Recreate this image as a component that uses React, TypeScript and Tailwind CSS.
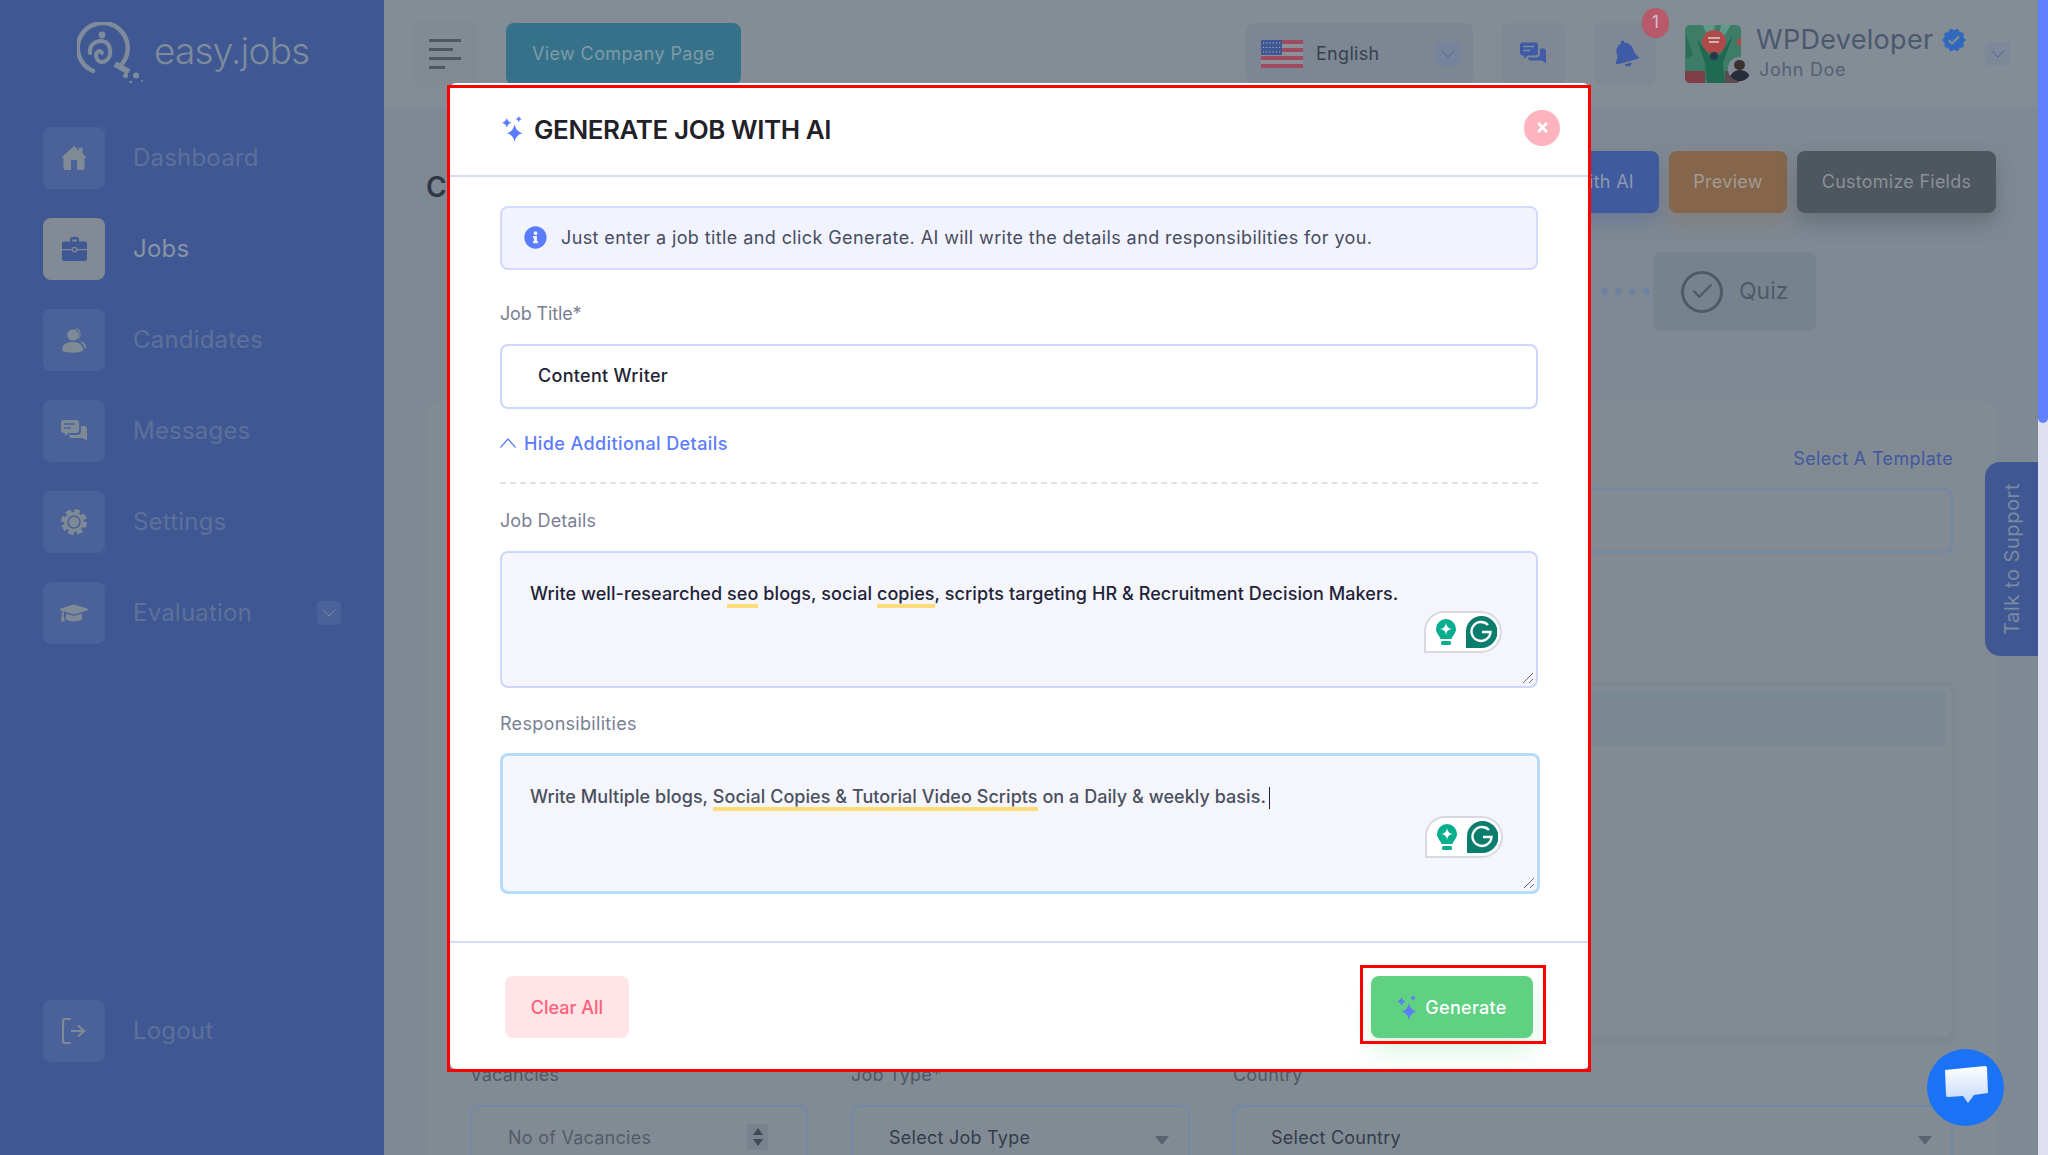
import { ChevronDown, Check } from 'lucide-react';
import { FaBell, FaGraduationCap, FaInfoCircle, FaTimes } from 'react-icons/fa';
import { MdVerified } from 'react-icons/md';

function Sparkles({ className }: { className?: string }) {
  return (
    <svg viewBox="0 0 20 25" className={className} fill="#5b7cfd">
      <path d="M12 8 Q13.3 15.2 19.5 16.5 Q13.3 17.8 12 25 Q10.7 17.8 4.5 16.5 Q10.7 15.2 12 8Z" />
      <path d="M4.5 2 Q5.4 5.6 9 6.5 Q5.4 7.4 4.5 11 Q3.6 7.4 0 6.5 Q3.6 5.6 4.5 2Z" />
      <path d="M16 0 Q16.5 2.5 19 3 Q16.5 3.5 16 6 Q15.5 3.5 13 3 Q15.5 2.5 16 0Z" />
    </svg>
  );
}

function Logo() {
  return (
    <svg viewBox="0 0 66 62" className="w-[66px] h-[62px]" fill="none" stroke="#7d8b9b">
      <path d="M16 49 A25 25 0 1 1 42 45" strokeWidth="4.5" strokeLinecap="round" />
      <path d="M13 31 C11 18 31 14 33 27 C35 38 24 44 20 37 C17 31 23 26 25 31" strokeWidth="4" strokeLinecap="round" />
      <circle cx="25" cy="13" r="3.4" fill="#7d8b9b" stroke="none" />
      <path d="M38 42 L52 50" strokeWidth="6" />
      <g fill="#7d8b9b" stroke="none">
        <circle cx="48.6" cy="53.6" r="2.5" />
        <circle cx="59" cy="53.6" r="3" />
        <circle cx="53.7" cy="60" r="1.3" />
        <circle cx="65" cy="59" r="1" />
      </g>
    </svg>
  );
}

function HomeIcon() {
  return (
    <svg viewBox="0 0 24 24" className="w-[24px] h-[24px]" fill="#7f8a97">
      <path fillRule="evenodd" d="M12 0 L17 4.6 V1.5 H20.5 V7.8 L24 11 V12 H22.5 V22.5 A1.5 1.5 0 0 1 21 24 H3 A1.5 1.5 0 0 1 1.5 22.5 V12 H0 V11Z M9 14 V24 H15 V14Z" />
    </svg>
  );
}

function BriefcaseIcon() {
  return (
    <svg viewBox="0 0 25 24" className="w-[25px] h-[24px]" fill="#3f5894">
      <path d="M8 5 V2.5 A2.5 2.5 0 0 1 10.5 0 H14.5 A2.5 2.5 0 0 1 17 2.5 V5 H14.8 V2.4 H10.2 V5Z" />
      <path d="M2 4.5 H23 A2 2 0 0 1 25 6.5 V12 H15.4 A3 3 0 0 0 9.6 12 H0 V6.5 A2 2 0 0 1 2 4.5Z" />
      <path d="M0 13.2 H9.6 A3 3 0 0 0 15.4 13.2 H25 V22 A2 2 0 0 1 23 24 H2 A2 2 0 0 1 0 22Z" />
      <circle cx="12.5" cy="12.6" r="1.6" />
    </svg>
  );
}

function UserIcon() {
  return (
    <svg viewBox="0 0 24 25" className="w-[24px] h-[25px]" fill="#7f8a97">
      <circle cx="11" cy="7" r="5.8" />
      <path d="M14 .6 C18 1 19.5 7 16.5 11" fill="none" stroke="#7f8a97" strokeWidth="1.2" />
      <path d="M0 22 C0 16 5 14 11 14 C17 14 21 17 21 22 C21 25.5 0 25.5 0 22Z" />
      <path d="M19 14 C22 15 24 18 23 20.5" fill="none" stroke="#7f8a97" strokeWidth="1.8" />
    </svg>
  );
}

function ChatIcon({ fill, bars, className }: { fill: string; bars: string; className: string }) {
  return (
    <svg viewBox="0 0 26 23" className={className}>
      <path d="M3 0 H15 A3 3 0 0 1 18 3 V10 A3 3 0 0 1 15 13 H8 L4 16 V13 H3 A3 3 0 0 1 0 10 V3 A3 3 0 0 1 3 0Z" fill={fill} />
      <path d="M3 4 H14 M3 8 H10" stroke={bars} strokeWidth="1.4" />
      <path d="M20 6 H23 A3 3 0 0 1 26 9 V21 L22 18 H11 A3 3 0 0 1 8 15 H16 A4 4 0 0 0 20 11Z" fill={fill} />
    </svg>
  );
}

function GearIcon() {
  return (
    <svg viewBox="0 0 26 26" className="w-[26px] h-[26px]" fill="none">
      <circle cx="13" cy="13" r="11" stroke="#7f8a97" strokeWidth="4" strokeDasharray="5.6 3.04" />
      <circle cx="13" cy="13" r="10" fill="#7f8a97" />
      <circle cx="13" cy="13" r="6" stroke="#4a6199" strokeWidth="1.5" />
    </svg>
  );
}

function LogoutIcon() {
  return (
    <svg viewBox="0 0 24 26" className="w-[24px] h-[26px]" fill="none" stroke="#7f8a97" strokeWidth="2.2">
      <path d="M9 1 H3 A2 2 0 0 0 1 3 V23 A2 2 0 0 0 3 25 H9" />
      <path d="M9 13 H22 M16 7.5 L22 13 L16 18.5" />
    </svg>
  );
}

function Flag() {
  return (
    <svg viewBox="0 0 42 28" className="w-[42px] h-[28px]">
      <rect width="42" height="28" fill="#8a929c" />
      <rect y="0" width="42" height="4" fill="#a04a5e" />
      <rect y="8" width="42" height="4" fill="#a04a5e" />
      <rect y="16" width="42" height="4" fill="#a04a5e" />
      <rect y="24" width="42" height="4" fill="#a04a5e" />
      <rect width="21" height="15" fill="#3f5894" />
      <path d="M2 3 H20 M2 7.5 H20 M2 12 H20" stroke="#aab2c4" strokeWidth="1.2" strokeDasharray="1.2 2" />
    </svg>
  );
}

function Avatar() {
  return (
    <div className="relative w-[56px] h-[58px] shrink-0">
      <svg viewBox="0 0 56 58" className="w-[56px] h-[58px] rounded-[5px]">
        <rect width="56" height="58" fill="#3d7d68" />
        <path d="M18 0 L26 22 L30 0Z M36 0 L32 22 L46 0Z" fill="#5f9a88" />
        <circle cx="29" cy="17" r="12" fill="#b04a4a" />
        <path d="M23 13 H35 M24 17 H34" stroke="#d9d4cd" strokeWidth="1.4" />
        <path d="M12 14 L20 38 L22 58 H40 L38 38 L48 10 L35 30 H24Z" fill="#1f6a50" />
        <circle cx="29" cy="31" r="4" fill="#26384f" />
        <path d="M0 46 H20 V58 H0Z" fill="#803e48" />
        <path d="M40 46 H56 V58 H40Z" fill="#5c4a50" />
        <path d="M1 10 L8 30 L1 34Z" fill="#2e6b54" />
        <circle cx="56" cy="17" r="4" fill="#a84a48" />
      </svg>
      <div className="absolute left-[43px] top-[32px] w-[23px] h-[24px] rounded-full bg-[#828b95] overflow-hidden flex flex-col items-center">
        <div className="w-[11px] h-[12px] mt-[3px] rounded-full bg-[#3a3230]" />
        <div className="w-[22px] h-[12px] rounded-t-full bg-[#262c38]" />
      </div>
    </div>
  );
}

function GrammarlyBadge() {
  return (
    <div className="absolute left-[922px] bottom-[33px] w-[78px] h-[42px] bg-white border-2 border-[#d8d9e2] rounded-tl-[20px] rounded-tr-[21px] rounded-br-[21px] flex items-center">
      <svg viewBox="0 0 20 26" className="ml-[10px] w-[20px] h-[26px] shrink-0">
        <path d="M10 0 A10 10 0 0 1 20 10 C20 14 17 16 15.5 20 H4.5 C3 16 0 14 0 10 A10 10 0 0 1 10 0Z" fill="#08ae8d" />
        <rect x="5" y="22" width="10" height="4" rx="1.5" fill="#08ae8d" />
        <path d="M10 4 Q10.5 9.5 16 10 Q10.5 10.5 10 16 Q9.5 10.5 4 10 Q9.5 9.5 10 4Z" fill="#fff" />
      </svg>
      <svg viewBox="0 0 31 32" className="ml-[10px] w-[31px] h-[32px] shrink-0">
        <path d="M15.5 0 A15.5 15.5 0 0 1 15.5 32 H0 V15.5 A15.5 15.5 0 0 1 15.5 0Z" fill="#0b7d6c" />
        <path d="M22 9 A9.5 9.5 0 1 0 24.5 16 H16" fill="none" stroke="#fff" strokeWidth="2.4" />
      </svg>
    </div>
  );
}

function ResizeGrip() {
  return (
    <svg viewBox="0 0 12 12" className="absolute right-[2px] bottom-[2px] w-[12px] h-[12px]" stroke="#6d6d73" strokeWidth="1">
      <path d="M1 11 L11 1 M7 11 L11 7" />
    </svg>
  );
}

function Flagged({ children }: { children: string }) {
  return <span className="border-b-4 border-[#fedb7b]">{children}</span>;
}

const navItems = [
  { label: 'Dashboard', icon: <HomeIcon /> },
  { label: 'Jobs', icon: <BriefcaseIcon />, active: true },
  { label: 'Candidates', icon: <UserIcon /> },
  { label: 'Messages', icon: <ChatIcon fill="#7f8a97" bars="#4a6199" className="w-[26px] h-[23px]" /> },
  { label: 'Settings', icon: <GearIcon /> },
  { label: 'Evaluation', icon: <FaGraduationCap size={28} color="#7f8a97" />, caret: true },
];

function NavRow({ label, icon, active, caret }: { label: string; icon: React.ReactNode; active?: boolean; caret?: boolean }) {
  return (
    <div className="flex items-center h-[62px]">
      <div className={`w-[62px] h-[62px] rounded-[8px] flex items-center justify-center ${active ? 'bg-[#828b95]' : 'bg-[#4a6199]'}`}>
        {icon}
      </div>
      <span className={`ml-[28px] text-[24px] tracking-[0.2px] ${active ? 'text-[#8893a3]' : 'text-[#5c7099]'}`}>{label}</span>
      {caret && (
        <div className="ml-auto w-[24px] h-[24px] rounded-[4px] bg-[#4a6199] flex items-center justify-center">
          <ChevronDown size={24} strokeWidth={1} color="#7f8a97" />
        </div>
      )}
    </div>
  );
}

function Sidebar() {
  return (
    <aside className="w-[384px] shrink-0 bg-[#3f5894] flex flex-col pl-[43px] pr-[43px] pb-[93px]">
      <div className="h-[127px] pt-[22px] pl-[34px] flex items-start">
        <Logo />
        <span className="ml-[11px] mt-[1px] text-[37px] font-light tracking-[-0.8px] text-[#7d8b9b]">easy.jobs</span>
      </div>
      <nav className="flex flex-col gap-[29px]">
        {navItems.map((item) => (
          <NavRow key={item.label} {...item} />
        ))}
      </nav>
      <div className="mt-auto">
        <NavRow label="Logout" icon={<LogoutIcon />} />
      </div>
    </aside>
  );
}

function TopBar() {
  return (
    <header className="h-[107px] shrink-0 bg-[#848c96] flex items-center pl-[28px] pr-[28px]">
      <div className="w-[66px] h-[65px] rounded-[8px] bg-[#828a94] flex flex-col justify-center gap-[6px] pl-[17px]">
        <div className="w-[32px] h-[3px] bg-[#4f5862]" />
        <div className="w-[24px] h-[3px] bg-[#4f5862]" />
        <div className="w-[32px] h-[3px] bg-[#4f5862]" />
        <div className="w-[16px] h-[3px] bg-[#4f5862]" />
      </div>
      <div className="ml-[28px] w-[235px] h-[62px] rounded-[8px] bg-[#35728a] flex items-center justify-center text-[18px] tracking-[0.4px] text-[#7f9aa8]">
        View Company Page
      </div>
      <div className="ml-auto w-[227px] h-[62px] rounded-[8px] bg-[#7d8793] flex items-center pl-[15px]">
        <Flag />
        <span className="ml-[13px] text-[18px] text-[#37404f] tracking-[0.3px]">English</span>
        <div className="ml-auto mr-[13px] w-[24px] h-[24px] rounded-[4px] bg-[#76849b] flex items-center justify-center">
          <ChevronDown size={24} strokeWidth={1} color="#4a64a6" />
        </div>
      </div>
      <div className="ml-[28px] w-[64px] h-[62px] rounded-[8px] bg-[#7f8893] flex items-center justify-center">
        <ChatIcon fill="#3f5ba8" bars="#828b95" className="w-[26px] h-[24px]" />
      </div>
      <div className="relative ml-[29px] w-[62px] h-[62px] rounded-[8px] bg-[#7f8893] flex items-center justify-center">
        <FaBell size={27} color="#3f5ba8" className="-rotate-[15deg]" />
        <div className="absolute left-[48px] top-[-15px] w-[27px] h-[30px] rounded-full bg-[#b8596c] flex items-center justify-center text-[17px] text-[#d8c0c8]">
          1
        </div>
      </div>
      <div className="ml-[29px]">
        <Avatar />
      </div>
      <div className="ml-[15px] w-[229px] flex flex-col mt-[-3px]">
        <div className="flex items-center">
          <span className="text-[27px] leading-[36px] text-[#4a586e] tracking-[0.3px]">WPDeveloper</span>
          <MdVerified size={26} color="#2f68bd" className="ml-[8px]" />
        </div>
        <span className="ml-[3px] text-[18px] leading-[24px] text-[#566172] tracking-[0.7px]">John Doe</span>
      </div>
      <div className="w-[25px] h-[24px] rounded-[4px] bg-[#7d8898] flex items-center justify-center">
        <ChevronDown size={24} strokeWidth={1} color="#4a64a6" />
      </div>
    </header>
  );
}

function SelectBox({ text, dark, arrow, spinner }: { text: string; dark?: boolean; arrow?: boolean; spinner?: boolean }) {
  return (
    <div className="h-[70px] rounded-[8px] border-2 border-[#7388a8] flex items-center pl-[36px] pr-[20px] pb-[6px]">
      <span className={`text-[18px] tracking-[0.25px] ${dark ? 'text-[#333c4c]' : 'text-[#525b68]'}`}>{text}</span>
      {arrow && (
        <svg viewBox="0 0 14 9" className="ml-auto mr-[-1px] mt-[6px] w-[14px] h-[9px]" fill="#5a636e">
          <path d="M0 0 H14 L7 9Z" />
        </svg>
      )}
      {spinner && (
        <div className="ml-auto mr-[18px] w-[21px] h-[26px] bg-[#79828c] flex flex-col items-center justify-center gap-[4px]">
          <svg viewBox="0 0 10 7" className="w-[10px] h-[7px]" fill="#3e4753"><path d="M5 0 L10 7 H0Z" /></svg>
          <svg viewBox="0 0 10 7" className="w-[10px] h-[7px]" fill="#3e4753"><path d="M5 7 L10 0 H0Z" /></svg>
        </div>
      )}
    </div>
  );
}

function PageContent() {
  return (
    <div className="flex-1 min-h-0 bg-[#7f8993] flex flex-col pl-[42px] pr-[42px]">
      <div className="mt-[44px] h-[62px] shrink-0 flex items-center">
        <h1 className="pt-[10px] text-[28px] font-semibold text-[#2f3844]">Create A Job</h1>
        <div className="ml-auto flex gap-[10px]">
          <div className="w-[300px] h-[62px] pb-[2px] rounded-[8px] bg-[#3f5a9d] shadow-[0_10px_20px_rgba(63,90,157,0.3)] flex items-center justify-end pr-[25px] text-[18px] text-[#8d98ad] tracking-[0.3px]">
            Generate With AI
          </div>
          <div className="w-[118px] h-[62px] pb-[2px] rounded-[8px] bg-[#85664c] shadow-[0_10px_20px_rgba(133,102,76,0.3)] flex items-center justify-center text-[18px] text-[#a39a90] tracking-[0.3px]">
            Preview
          </div>
          <div className="w-[199px] h-[62px] pb-[2px] rounded-[8px] bg-[#4e565f] shadow-[0_10px_20px_rgba(50,56,64,0.3)] flex items-center justify-center text-[18px] text-[#8b9098] tracking-[0.25px]">
            Customize Fields
          </div>
        </div>
      </div>
      <div className="mt-[39px] h-[79px] shrink-0 flex items-center justify-end pr-[180px]">
        <div className="flex items-center gap-[7px] mr-[3px]">
          <div className="w-[7px] h-[7px] rounded-full bg-[#6f81a0]" />
          <div className="w-[7px] h-[7px] rounded-full bg-[#6f81a0]" />
          <div className="w-[7px] h-[7px] rounded-full bg-[#6f81a0]" />
          <div className="w-[7px] h-[7px] rounded-full bg-[#6f81a0]" />
        </div>
        <div className="w-[163px] h-[79px] rounded-[8px] bg-[#76838f] flex items-center pl-[28px]">
          <div className="w-[42px] h-[42px] rounded-full border-[3px] border-[#4f5a68] flex items-center justify-center">
            <Check size={25} strokeWidth={2.2} color="#4f5a68" />
          </div>
          <span className="ml-[16px] text-[23px] text-[#4f5a68]">Quiz</span>
        </div>
      </div>
      <section className="mt-[71px] flex-1 min-h-0 rounded-t-[10px] bg-[#828b94] pl-[44px] pr-[43px] pt-[43px]">
        <div className="h-[28px] flex justify-end text-[18px] leading-[28px] text-[#41589e] tracking-[0.35px]">Select A Template</div>
        <div className="mt-[15px] h-[65px] rounded-[8px] border-2 border-[#7388a8]" />
        <div className="mt-[131px] h-[354px] rounded-[8px] bg-[#828b94] border border-[#7b858f] shadow-[0_2px_6px_rgba(70,80,90,0.12)] p-[6px]">
          <div className="h-[55px] bg-[#7a8894]" />
        </div>
        <div className="mt-[23px] grid grid-cols-[338px_339px_1fr] gap-x-[43px]">
          <div>
            <div className="h-[28px] text-[18px] leading-[28px] text-[#4f5866] tracking-[0.2px]">Vacancies</div>
            <div className="mt-[16px]"><SelectBox text="No of Vacancies" spinner /></div>
          </div>
          <div>
            <div className="h-[28px] text-[18px] leading-[28px] text-[#4f5866] tracking-[0.2px]">Job Type*</div>
            <div className="mt-[16px]"><SelectBox text="Select Job Type" dark arrow /></div>
          </div>
          <div>
            <div className="h-[28px] text-[18px] leading-[28px] text-[#4f5866] tracking-[0.2px]">Country</div>
            <div className="mt-[16px]"><SelectBox text="Select Country" dark arrow /></div>
          </div>
        </div>
      </section>
    </div>
  );
}

function GenerateModal() {
  return (
    <div className="absolute left-[450px] top-[83px] w-[1139px] h-[986px] bg-white rounded-[6px] flex flex-col">
      <div className="h-[94px] shrink-0 border-b-2 border-[#d3dcfb] flex items-center pl-[52px] pr-[29px]">
        <Sparkles className="w-[21px] h-[26px]" />
        <h2 className="ml-[11px] text-[26px] font-semibold text-[#1f2229] tracking-[-0.42px]">GENERATE JOB WITH AI</h2>
        <button className="ml-auto mt-[-3px] w-[36px] h-[36px] rounded-full bg-[#ffb3bc] flex items-center justify-center">
          <FaTimes size={15} color="#fff" />
        </button>
      </div>
      <div className="flex-1 pl-[50px] pr-[51px] pt-[29px]">
        <div className="h-[64px] pb-[2px] rounded-[8px] border-2 border-[#d3dafc] bg-[#f1f3fe] flex items-center pl-[22px]">
          <FaInfoCircle size={23} color="#5b7cfd" />
          <span className="ml-[14px] text-[18px] text-[#474c60] tracking-[0.4px]">
            Just enter a job title and click Generate. AI will write the details and responsibilities for you.
          </span>
        </div>
        <label className="block mt-[30px] h-[28px] text-[18px] leading-[28px] text-[#7a7f94] tracking-[-0.15px]">Job Title*</label>
        <div className="mt-[16px] h-[65px] pb-[2px] rounded-[8px] border-2 border-[#cdd6fb] flex items-center pl-[36px] text-[18px] font-medium text-[#1f2333] tracking-[0.3px]">
          Content Writer
        </div>
        <button className="mt-[20px] h-[28px] flex items-center text-[18px] font-medium text-[#5b7cfd] tracking-[0.4px]">
          <svg viewBox="0 0 16 10" className="w-[16px] h-[10px]" fill="none" stroke="#5b7cfd" strokeWidth="1.2">
            <path d="M.5 9.5 L8 1 L15.5 9.5" />
          </svg>
          <span className="ml-[8px]">Hide Additional Details</span>
        </button>
        <div className="mt-[25px] border-t-2 border-dashed border-[#dfe1ea]" />
        <label className="block mt-[23px] h-[28px] text-[18px] leading-[28px] text-[#7a7f94] tracking-[0.1px]">Job Details</label>
        <div className="relative mt-[16px] h-[137px] rounded-[8px] border-2 border-[#cdd6fb] bg-[#f5f6fc] pl-[28px] pt-[27px] text-[18px] leading-[28px] font-medium text-[#1f2338] tracking-[0.08px]">
          Write well-researched <Flagged>seo</Flagged> blogs, social <Flagged>copies</Flagged>, scripts targeting HR &amp; Recruitment Decision Makers.
          <GrammarlyBadge />
          <ResizeGrip />
        </div>
        <label className="block mt-[22px] h-[28px] text-[18px] leading-[28px] text-[#7a7f94] tracking-[0.3px]">Responsibilities</label>
        <div className="relative mt-[15px] h-[141px] w-[1040px] rounded-[8px] border-[3px] border-[#b5dcfa] bg-[#f5f6fc] pl-[27px] pt-[27px] text-[18px] leading-[28px] font-medium text-[#4a4f5e] tracking-[0.05px]">
          Write Multiple blogs, <Flagged>Social Copies &amp; Tutorial Video Scripts</Flagged> on a Daily &amp; weekly basis.<span className="inline-block ml-[3px] w-[1.5px] h-[22px] align-middle bg-[#1f2338]" />
          <GrammarlyBadge />
          <ResizeGrip />
        </div>
      </div>
      <div className="h-[128px] shrink-0 border-t-2 border-[#d3dcfb] flex items-center justify-between pl-[55px] pr-[56px] pt-[2px]">
        <button className="w-[124px] h-[62px] rounded-[8px] bg-[#ffe4e8] text-[18px] font-medium text-[#ff5f78]">Clear All</button>
        <button className="w-[162px] h-[62px] rounded-[8px] bg-[#60d082] shadow-[0_14px_24px_rgba(96,208,130,0.22)] flex items-center justify-center text-[18px] font-medium text-white tracking-[0.3px]">
          <Sparkles className="w-[20px] h-[25px]" />
          <span className="ml-[8px]">Generate</span>
        </button>
      </div>
    </div>
  );
}

export default function App() {
  return (
    <div className="relative w-[2048px] h-[1155px] overflow-hidden flex font-['Inter',sans-serif]">
      <Sidebar />
      <main className="flex-1 min-w-0 flex flex-col">
        <TopBar />
        <PageContent />
      </main>
      <div className="w-[10px] shrink-0 bg-[#dfe0f3]">
        <div className="h-[423px] rounded-b-[5px] bg-[#5f80ff]" />
      </div>

      {/* floating support tab + chat */}
      <div className="absolute left-[1985px] top-[462px] w-[53px] h-[194px] rounded-l-[15px] bg-[#3f5894] flex items-center justify-center">
        <span className="[writing-mode:vertical-rl] rotate-180 text-[20px] tracking-[0.55px] text-[#7a8aa0]">Talk to Support</span>
      </div>
      <div className="absolute left-[1927px] top-[1049px] w-[77px] h-[77px] rounded-full bg-[#1a73f5] flex items-center justify-center">
        <svg viewBox="0 0 44 46" className="w-[44px] h-[46px]">
          <defs>
            <linearGradient id="bubble" x1="0" y1="0" x2="0" y2="1">
              <stop offset="0" stopColor="#ffffff" />
              <stop offset="1" stopColor="#c4d8fb" />
            </linearGradient>
          </defs>
          <path d="M1 5 L41 1 Q43 1 43 3 L44 28 L30 30 L24 38 L19 31 L4 32 Q2 32 2 30Z" fill="url(#bubble)" />
        </svg>
      </div>

      <GenerateModal />

      {/* red annotation frames */}
      <div className="absolute left-[447px] top-[85px] w-[1144px] h-[987px] border-[3px] border-[#ff0000] pointer-events-none" />
      <div className="absolute left-[1360px] top-[965px] w-[186px] h-[79px] border-[3px] border-[#ff0000] pointer-events-none" />
    </div>
  );
}
